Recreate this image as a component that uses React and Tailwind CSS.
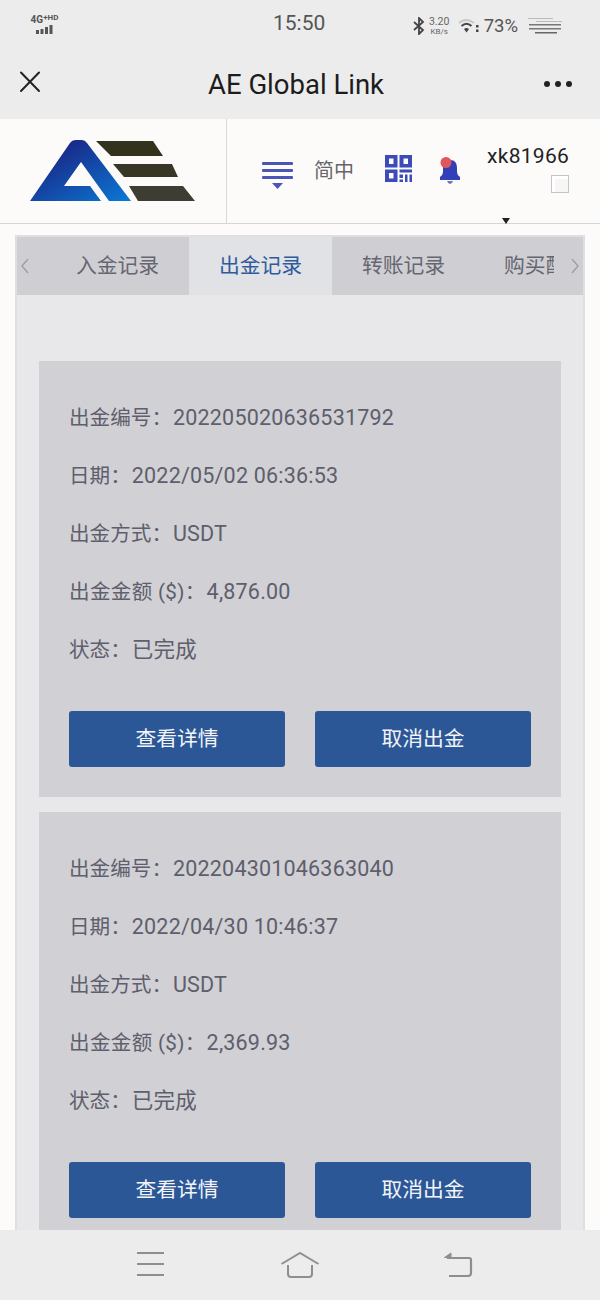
const records = [
  {
    no: "202205020636531792",
    date: "2022/05/02 06:36:53",
    amount: "4,876.00",
  },
  {
    no: "202204301046363040",
    date: "2022/04/30 10:46:37",
    amount: "2,369.93",
  },
];

function Logo() {
  return (
    <svg width="170" height="64" viewBox="28 139 170 64">
      <defs>
        <linearGradient id="aeBlue" x1="0" y1="0" x2="1" y2="1">
          <stop offset="0.15" stopColor="#1b2383" />
          <stop offset="1" stopColor="#0a7ad6" />
        </linearGradient>
      </defs>
      <path
        fill="url(#aeBlue)"
        fillRule="evenodd"
        d="M30 201 L70 143 Q72 140 76 140 L82 140 Q85 140 87 143 L131 201 L109 201 L81 162 L64 186 L90 186 L101 201 Z"
      />
      <path fill="#33321c" d="M96 141 H153 L163 156 H111 Z" />
      <path fill="#383726" d="M113 164 H172 L178 177 H124 Z" />
      <path fill="#3d3d33" d="M129 186 H183 L195 201 H138 Z" />
    </svg>
  );
}

function StatusBar() {
  return (
    <div className="h-[44px] flex items-start relative text-[#555]">
      <div className="ml-[30px] mt-[12px] flex flex-col items-center w-[29px]">
        <span className="font-bold leading-[11px] text-[#555] whitespace-nowrap">
          <span className="text-[10px]">4G</span>
          <span className="text-[8px] align-top">+HD</span>
        </span>
        <svg width="17" height="9" viewBox="0 0 17 9">
          <rect x="0" y="5" width="3" height="4" fill="#555" />
          <rect x="4.500" y="4" width="3" height="5" fill="#555" />
          <rect x="9" y="2" width="3" height="7" fill="#555" />
          <rect x="13.500" y="0" width="3" height="9" fill="#555" />
        </svg>
      </div>
      <span className="absolute left-[273px] top-[10px] text-[21px] leading-[26px] font-['Roboto',sans-serif]">15:50</span>
      <div className="ml-auto mt-[14px] flex items-center pr-[37px]">
        <svg width="12" height="18" viewBox="0 0 12 18" fill="none" stroke="#444" strokeWidth="1.800">
          <path d="M1 5 L10 13 L6 17 V1 L10 5 L1 13" />
        </svg>
        <div className="flex flex-col items-center ml-[3px] text-[#666] w-[23px]">
          <span className="text-[10.500px] leading-[10px]">3.20</span>
          <span className="text-[8px] leading-[9px]">KB/s</span>
        </div>
        <svg className="ml-[7px]" width="21" height="16" viewBox="0 0 21 16">
          <path d="M1 5 Q8 -1 16 5" fill="none" stroke="#c8c8c8" strokeWidth="2" />
          <path d="M3.500 8 Q8.500 3.500 13.500 8" fill="none" stroke="#444" strokeWidth="2" />
          <path d="M6 11 Q8.500 9 11 11 L8.500 14.500 Z" fill="#444" />
          <rect x="18" y="7" width="2.500" height="2.500" fill="#444" />
          <rect x="18" y="11.500" width="2.500" height="2.500" fill="#444" />
        </svg>
        <span className="ml-[5px] text-[18.500px] leading-[24px] font-['Roboto',sans-serif]">73%</span>
        <svg className="ml-[9px]" width="36" height="16" viewBox="0 0 36 16">
          <rect x="1" y="0" width="25" height="1" fill="#bbb" />
          <rect x="9" y="3" width="26" height="1" fill="#bbb" />
          <rect x="2" y="6" width="32" height="1.500" fill="#777" />
          <rect x="2" y="10" width="32" height="1.500" fill="#777" />
          <rect x="8" y="14" width="22" height="1.500" fill="#666" />
        </svg>
      </div>
    </div>
  );
}

function TitleBar() {
  return (
    <div className="h-[75px] flex items-center justify-between pl-[19px] pr-[28px] pt-[7px]">
      <svg className="-mt-[6px]" width="22" height="22" viewBox="0 0 22 22" stroke="#222" strokeWidth="2" strokeLinecap="round">
        <path d="M2 1.500 L20 20 M20 1.500 L2 20" />
      </svg>
      <span className="text-[27.500px] leading-[34px] text-[#1c1c1c] font-['Roboto',sans-serif] ml-[7px]">AE Global Link</span>
      <div className="flex gap-[5px] -mt-[2px]">
        <span className="w-[6px] h-[6px] rounded-full bg-[#222]" />
        <span className="w-[6px] h-[6px] rounded-full bg-[#222]" />
        <span className="w-[6px] h-[6px] rounded-full bg-[#222]" />
      </div>
    </div>
  );
}

function Header() {
  return (
    <div className="h-[105px] bg-[#fcfbfa] border-b border-[#d6d6d6] flex relative">
      <div className="w-[227px] h-full border-r border-[#d9d9d9] flex items-start pl-[28px] pt-[20px]">
        <Logo />
      </div>
      <div className="flex items-start">
        <svg className="ml-[35px] mt-[42px]" width="31" height="30" viewBox="0 0 31 30" fill="#4a55b8">
          <rect x="0" y="1" width="31" height="3" rx="1" />
          <rect x="0" y="8" width="31" height="3" rx="1" />
          <rect x="0" y="15" width="31" height="3" rx="1" />
          <path d="M10 22 H21 L15.500 28 Z" />
        </svg>
        <span className="ml-[21px] mt-[38px] text-[20px] leading-[28px] text-[#666]">简中</span>
        <svg className="ml-[31px] mt-[36px]" width="27" height="27" viewBox="0 0 27 27" fill="#3d4bb8">
          <path fillRule="evenodd" d="M0 0 H12.500 V12.500 H0 Z M4 3.500 V9 H8.500 V3.500 Z" />
          <path fillRule="evenodd" d="M14.500 0 H27 V12.500 H14.500 Z M18.500 3.500 V9 H23 V3.500 Z" />
          <path fillRule="evenodd" d="M0 14.500 H12.500 V27 H0 Z M4 18 V23.500 H8.500 V18 Z" />
          <rect x="14.500" y="14.500" width="12.500" height="3" />
          <rect x="14.500" y="19.500" width="3.500" height="3.500" />
          <rect x="14.500" y="24.500" width="3.500" height="2.500" />
          <rect x="20" y="19.500" width="2.500" height="7.500" />
          <rect x="24.500" y="19.500" width="2.500" height="7.500" />
        </svg>
        <svg className="ml-[26px] mt-[38px]" width="24" height="28" viewBox="0 0 24 28">
          <path fill="#3240b8" d="M12 3 C17 3 19 6 19 11 V15 Q19 18 22 20 V23 H2 V20 Q5 18 5 15 V11 C5 6 7 3 12 3 Z" />
          <path fill="#7078b0" d="M9 24 H15 Q14 27 12 27 Q10 27 9 24 Z" />
          <circle cx="8" cy="5.500" r="5.500" fill="#e0565a" />
        </svg>
        <div className="ml-[25px] mt-[23px] flex flex-col items-end">
          <span className="text-[21px] leading-[28px] text-[#222] font-['Roboto',sans-serif] tracking-[0.3px]">xk81966</span>
          <span className="mt-[5px] w-[18px] h-[18px] border border-[#c4c4c4] bg-[#f6f6f6] shadow-[inset_3px_3px_0_#fff]" />
        </div>
      </div>
      <span className="absolute left-[502px] bottom-[-1px] w-0 h-0 border-x-[4px] border-x-transparent border-t-[6px] border-t-[#222]" />
    </div>
  );
}

function Tabs() {
  const tabClass = "w-[143px] shrink-0 flex items-center justify-center pt-[1px]";
  return (
    <div className="h-[58px] flex text-[20.800px] text-[#666672] bg-[#cfcfd3]">
      <div className="w-[29px] shrink-0 flex items-center pl-[3px] text-[#9c9ca4]">
        <svg width="10" height="16" viewBox="0 0 10 16" fill="none" stroke="currentColor" strokeWidth="1.300">
          <path d="M8 1 L2 8 L8 15" />
        </svg>
      </div>
      <div className="flex-1 flex overflow-hidden">
        <div className={tabClass}>入金记录</div>
        <div className={`${tabClass} bg-[#e1e2e6] text-[#2f5a9c]`}>出金记录</div>
        <div className={tabClass}>转账记录</div>
        <div className="shrink-0 flex items-center pl-[29px] pt-[1px] whitespace-nowrap">购买配套记录</div>
      </div>
      <div className="w-[29px] shrink-0 flex items-center justify-end pr-[3px] text-[#9c9ca4]">
        <svg width="10" height="16" viewBox="0 0 10 16" fill="none" stroke="currentColor" strokeWidth="1.300">
          <path d="M2 1 L8 8 L2 15" />
        </svg>
      </div>
    </div>
  );
}

function RecordCard({ record }) {
  const rows = [
    ["出金编号", record.no],
    ["日期", record.date],
    ["出金方式", "USDT"],
    ["出金金额 ($)", record.amount],
    ["状态", "已完成"],
  ];

  return (
    <div className="bg-[#d0d0d5] pt-[28px] px-[30px] pb-[30px]">
      {rows.map(([label, value]) => (
        <div key={label} className="h-[58px] flex items-center text-[20.600px] text-[#5e5e6c] whitespace-pre">
          <span className={label === "出金金额 ($)" ? "tracking-[0.3px]" : ""}>{label}：</span>
          <span className="ml-[1px] text-[21.500px] tracking-[0.2px]">{value}</span>
        </div>
      ))}
      <div className="mt-[32px] flex justify-between">
        <button className="w-[216px] h-[56px] pt-[1px] rounded-[3px] bg-[#2b5797] text-[#f2f4f8] text-[20.800px]">
          查看详情
        </button>
        <button className="w-[216px] h-[56px] pt-[1px] rounded-[3px] bg-[#2b5797] text-[#f2f4f8] text-[20.800px]">
          取消出金
        </button>
      </div>
    </div>
  );
}

function BottomNav() {
  return (
    <div className="h-[70px] shrink-0 bg-[#ececec] flex items-start pt-[22px]">
      <svg className="ml-[137px]" width="28" height="24" viewBox="0 0 28 24" stroke="#8e8e8e" strokeWidth="2.200">
        <path d="M0 1 H27 M0 12 H27 M0 23 H27" />
      </svg>
      <svg className="ml-[116px]" width="38" height="26" viewBox="0 0 38 26" fill="none" stroke="#8e8e8e" strokeWidth="2">
        <path d="M0.500 12 L19 1 L37.500 12" />
        <path d="M7 13 V22 Q7 25 10 25 H28 Q31 25 31 22 V13" />
      </svg>
      <svg className="ml-[124px]" width="30" height="26" viewBox="0 0 30 26" fill="none" stroke="#8e8e8e" strokeWidth="2.200">
        <path d="M4 6 H26 Q28 6 28 8 V21 Q28 24 25 24 H6" />
        <path d="M8 1 L1.500 5.500 H8 Z" fill="#8e8e8e" strokeWidth="1" />
      </svg>
    </div>
  );
}

function App() {
  return (
    <div className="w-[600px] h-[1300px] flex flex-col overflow-hidden bg-[#fcfbfa] font-['Roboto','Noto_Sans_CJK_SC',sans-serif]">
      <div className="bg-[#ececec] shrink-0">
        <StatusBar />
        <TitleBar />
      </div>
      <Header />
      <div className="flex-1 min-h-0 overflow-hidden px-[15px] pt-[11px]">
        <div className="border-2 border-b-0 border-[#dedee3] bg-[#e8e8eb]">
          <Tabs />
          <div className="px-[22px] pt-[66px] flex flex-col gap-[15px]">
            {records.map((record) => (
              <RecordCard key={record.no} record={record} />
            ))}
          </div>
        </div>
      </div>
      <BottomNav />
    </div>
  );
}

export default App;
